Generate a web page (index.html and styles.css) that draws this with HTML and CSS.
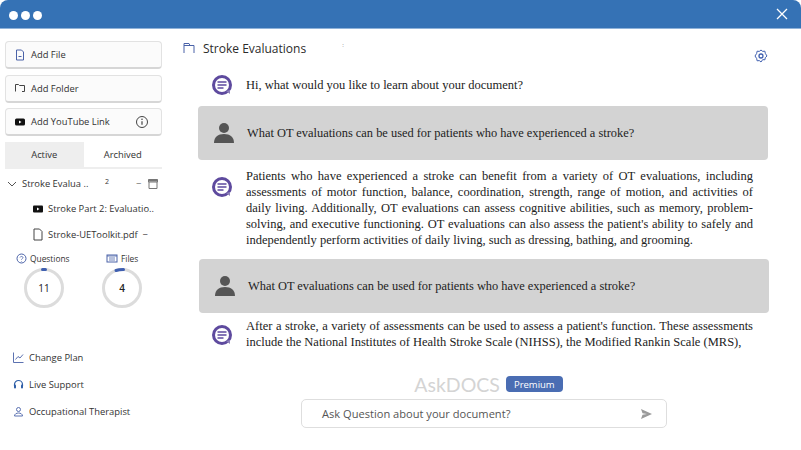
FILE: index.html
```html
<!doctype html>
<html>
  <head>
    <meta charset="UTF-8" />
    <title>AskDOCS</title>
    <link rel="stylesheet" href="styles.css">
  </head>
  <body>
    <div class="window">
      <header class="titlebar">
        <div class="dots"><span></span><span></span><span></span></div>
        <svg class="close" width="14" height="14" viewBox="0 0 14 14"><path d="M2 2l10 10M12 2L2 12" stroke="#fff" stroke-width="1.3" fill="none"/></svg>
      </header>
      <div class="content">
        <aside class="sidebar">
          <button class="add-btn">
            <svg width="12" height="12" viewBox="0 0 12 12"><path d="M2.500 1h5l2 2v8h-7z" fill="none" stroke="#4a62a8"/><path d="M4.500 7.500h3" stroke="#4a62a8"/></svg>
            Add File
          </button>
          <button class="add-btn">
            <svg width="12" height="12" viewBox="0 0 12 12"><path d="M1.500 9.500v-7h3l1 1h5v6M8 9.500h2.500" fill="none" stroke="#444"/></svg>
            Add Folder
          </button>
          <button class="add-btn">
            <svg width="12" height="12" viewBox="0 0 12 12"><rect x="1" y="2.500" width="10" height="7" rx="1.500" fill="#111"/><path d="M5 4.500l2.500 1.500L5 7.500z" fill="#fff"/></svg>
            Add YouTube Link
            <svg class="info" width="14" height="14" viewBox="0 0 14 14"><circle cx="7" cy="7" r="5.500" fill="none" stroke="#444"/><path d="M7 6.200v3.600" stroke="#444" stroke-width="1.200"/><circle cx="7" cy="4.300" r=".8" fill="#444"/></svg>
          </button>

          <div class="tabs">
            <div class="tab tab-active">Active</div>
            <div class="tab">Archived</div>
          </div>

          <div class="tree-row">
            <svg width="10" height="10" viewBox="0 0 10 10"><path d="M1 3l4 4 4-4" fill="none" stroke="#555"/></svg>
            <span class="tree-name">Stroke Evalua ..</span>
            <span class="tree-count">2</span>
            <span class="tree-dash">&minus;</span>
            <svg width="12" height="12" viewBox="0 0 12 12"><path d="M1.500 1.500h9v2.500h-9zM2 4v6.500h8V4" fill="none" stroke="#777"/><rect x="1.500" y="1.500" width="9" height="2" fill="#777"/></svg>
          </div>
          <div class="doc-row">
            <svg width="12" height="12" viewBox="0 0 12 12"><rect x="1" y="2.500" width="10" height="7" rx="1" fill="#111"/><path d="M5 4.500l2.500 1.500L5 7.500z" fill="#fff"/></svg>
            <span>Stroke Part 2: Evaluatio..</span>
          </div>
          <div class="doc-row">
            <svg width="12" height="13" viewBox="0 0 12 13"><path d="M2 1h5.500L10 3.500V12H2z" fill="none" stroke="#444"/></svg>
            <span>Stroke-UEToolkit.pdf &nbsp;&minus;</span>
          </div>

          <div class="stats">
            <div class="stat">
              <div class="stat-label">
                <svg width="11" height="11" viewBox="0 0 11 11"><circle cx="5.500" cy="5.500" r="4.500" fill="none" stroke="#4a62a8"/><path d="M4 4.500c.3-1.500 3-1.300 3 .1 0 1-1.500 1-1.500 2M5.500 8v.6" fill="none" stroke="#4a62a8" stroke-width=".8"/></svg>
                Questions
              </div>
              <div class="ring ring-questions">
                <svg width="40" height="40" viewBox="0 0 40 40"><circle cx="20" cy="20" r="18.500" fill="none" stroke="#dcdcdc" stroke-width="3"/><path d="M18.500 1.500h3" fill="none" stroke="#3f5fb0" stroke-width="3" stroke-linecap="round"/></svg>
                <span>11</span>
              </div>
            </div>
            <div class="stat">
              <div class="stat-label">
                <svg width="12" height="11" viewBox="0 0 12 11"><rect x="1" y="2" width="10" height="7" fill="none" stroke="#4a62a8"/><path d="M1 3h10M3 5h6M3 7h6" stroke="#4a62a8" stroke-width=".8"/></svg>
                Files
              </div>
              <div class="ring ring-files">
                <svg width="40" height="40" viewBox="0 0 40 40"><circle cx="20" cy="20" r="18.500" fill="none" stroke="#dcdcdc" stroke-width="3"/><path d="M14 2.500c2-.7 4-1 7.500-1" fill="none" stroke="#3f5fb0" stroke-width="3" stroke-linecap="round"/></svg>
                <span>4</span>
              </div>
            </div>
          </div>

          <nav class="links">
            <a>
              <svg width="11" height="11" viewBox="0 0 11 11"><path d="M.5.500v10h10M2.500 7.500l2.500-3 2 1.500L10 2.500" fill="none" stroke="#4a62a8" stroke-width=".9"/></svg>
              Change Plan
            </a>
            <a>
              <svg width="11" height="11" viewBox="0 0 11 11"><path d="M1.500 7V5.500a4 4 0 0 1 8 0V7" fill="none" stroke="#2f5fa8" stroke-width="1.200"/><rect x="1" y="5.500" width="2" height="4" rx="1" fill="#2f5fa8"/><rect x="8" y="5.500" width="2" height="4" rx="1" fill="#2f5fa8"/></svg>
              Live Support
            </a>
            <a>
              <svg width="11" height="11" viewBox="0 0 11 11"><circle cx="5.500" cy="3.500" r="2" fill="none" stroke="#4a62a8" stroke-width=".9"/><path d="M1.500 10c0-4 8-4 8 0z" fill="none" stroke="#4a62a8" stroke-width=".9"/></svg>
              Occupational Therapist
            </a>
          </nav>
        </aside>

        <main class="main">
          <div class="chat-head">
            <div class="chat-title">
              <svg width="12" height="12" viewBox="0 0 12 12"><path d="M1 11V1.500h5l1 2h4V11M1 3.500h6" fill="none" stroke="#4a62a8"/></svg>
              Stroke Evaluations
              <span class="speck">:</span>
            </div>
            <svg class="gear" width="14" height="14" viewBox="0 0 14 14"><path d="M7 1l1.700 1.400 2.200-.2.400 2.200L13 7l-1.700 1.600-.4 2.200-2.200-.2L7 13l-1.700-1.400-2.200.2-.4-2.200L1 7l1.700-2.600.4-2.200 2.200.2z" fill="none" stroke="#3f5fb0"/><circle cx="7" cy="7" r="2" fill="none" stroke="#3f5fb0" stroke-width="1.300"/></svg>
          </div>

          <div class="msg msg-first">
            <svg class="bot" width="22" height="22" viewBox="0 0 22 22"><circle cx="11" cy="11" r="8.500" fill="#fff" stroke="#5e4a9e" stroke-width="3"/><path d="M6.500 8h9M6.500 11h9M6.500 14h6" stroke="#5e4a9e" stroke-width="1.600"/><path d="M15 17l4 3v-4z" fill="#8d80b8"/></svg>
            <p>Hi, what would you like to learn about your document?</p>
          </div>

          <div class="msg msg-user">
            <svg class="person" width="22" height="22" viewBox="0 0 22 22"><circle cx="11" cy="6" r="5" fill="#555"/><path d="M1 21c0-6 4-9 10-9s10 3 10 9z" fill="#555"/></svg>
            <p>What OT evaluations can be used for patients who have experienced a stroke?</p>
          </div>

          <div class="msg msg-answer">
            <svg class="bot" width="22" height="22" viewBox="0 0 22 22"><circle cx="11" cy="11" r="8.500" fill="#fff" stroke="#5e4a9e" stroke-width="3"/><path d="M6.500 8h9M6.500 11h9M6.500 14h6" stroke="#5e4a9e" stroke-width="1.600"/><path d="M15 17l4 3v-4z" fill="#8d80b8"/></svg>
            <p>Patients who have experienced a stroke can benefit from a variety of OT evaluations, including assessments of motor function, balance, coordination, strength, range of motion, and activities of daily living. Additionally, OT evaluations can assess cognitive abilities, such as memory, problem-solving, and executive functioning. OT evaluations can also assess the patient's ability to safely and independently perform activities of daily living, such as dressing, bathing, and grooming.</p>
          </div>

          <div class="msg msg-user msg-user-2">
            <svg class="person" width="22" height="22" viewBox="0 0 22 22"><circle cx="11" cy="6" r="5" fill="#555"/><path d="M1 21c0-6 4-9 10-9s10 3 10 9z" fill="#555"/></svg>
            <p>What OT evaluations can be used for patients who have experienced a stroke?</p>
          </div>

          <div class="msg msg-answer msg-last">
            <svg class="bot" width="22" height="22" viewBox="0 0 22 22"><circle cx="11" cy="11" r="8.500" fill="#fff" stroke="#5e4a9e" stroke-width="3"/><path d="M6.500 8h9M6.500 11h9M6.500 14h6" stroke="#5e4a9e" stroke-width="1.600"/><path d="M15 17l4 3v-4z" fill="#8d80b8"/></svg>
            <p>After a stroke, a variety of assessments can be used to assess a patient's function. These assessments include the National Institutes of Health Stroke Scale (NIHSS), the Modified Rankin Scale (MRS),</p>
          </div>

          <div class="brand">
            <span class="brand-name">AskDOCS</span>
            <span class="badge">Premium</span>
          </div>
          <div class="ask">
            <span>Ask Question about your document?</span>
            <svg width="13" height="12" viewBox="0 0 13 12"><path d="M1 1l11 5-11 5 1.500-4.200L7 6l-4.500-.8z" fill="#9a9a9a"/></svg>
          </div>
        </main>
      </div>
    </div>
  </body>
</html>
```

FILE: styles.css
```css
html, body {
  margin: 0;
  height: 100%;
}
body {
  font-family: "Open Sans", "Liberation Sans", sans-serif;
  background: #fff;
  color: #333;
  overflow: hidden;
}
svg {
  display: block;
  flex: none;
}
.window {
  height: 450px;
  display: flex;
  flex-direction: column;
}
.titlebar {
  height: 28px;
  background: #3572b5;
  border-bottom: 1px solid #8fb2d9;
  border-radius: 8px 8px 0 0;
  display: flex;
  align-items: center;
  justify-content: space-between;
  padding: 0 12px 0 9px;
}
.dots {
  display: flex;
  gap: 3px;
  margin-top: 3px;
}
.dots span {
  width: 9px;
  height: 9px;
  border-radius: 50%;
  background: #fff;
}
.content {
  flex: 1;
  display: flex;
}

/* left column */
.sidebar {
  width: 157px;
  padding: 12px 0 0 5px;
  font-size: 9.400px;
}
.add-btn {
  width: 100%;
  height: 28px;
  margin-bottom: 5.500px;
  padding: 0 8px;
  display: flex;
  align-items: center;
  gap: 5px;
  background: #fbfbfb;
  border: 1px solid #e2e2e2;
  border-bottom: 2px solid #d6d6d6;
  border-radius: 4px;
  font: inherit;
  color: #333;
}
.info {
  margin-left: auto;
  margin-right: 4px;
}
.tabs {
  display: flex;
  height: 25px;
  border-bottom: 2px solid #eee;
}
.tab {
  flex: 1;
  display: flex;
  align-items: center;
  justify-content: center;
}
.tab-active {
  background: #eeeeee;
}
.tree-row {
  margin-top: 7px;
  height: 16px;
  display: flex;
  align-items: center;
  padding-left: 2px;
}
.tree-name {
  margin-left: 5px;
  width: 74px;
  white-space: nowrap;
}
.tree-count {
  font-size: 7px;
  margin: -4px 0 0 9px;
}
.tree-dash {
  margin-left: 27px;
  margin-right: 6px;
  color: #666;
}
.doc-row {
  margin-top: 9px;
  height: 16px;
  display: flex;
  align-items: center;
  gap: 4px;
  padding-left: 27px;
  white-space: nowrap;
}
.doc-row + .doc-row {
  margin-top: 10px;
}
.stats {
  display: flex;
  margin-top: 10px;
}
.stat {
  width: 85px;
  padding-left: 11px;
  box-sizing: border-box;
}
.stat + .stat {
  padding-left: 16px;
  width: 72px;
}
.stat-label {
  display: flex;
  align-items: center;
  gap: 3px;
  font-size: 8.400px;
  height: 12px;
}
.ring {
  width: 40px;
  height: 40px;
  margin-top: 3px;
  display: grid;
  place-items: center;
  font-size: 10px;
  color: #222;
}
.ring > * {
  grid-area: 1 / 1;
}
.ring-questions {
  margin-left: 8px;
}
.ring-files {
  margin-left: -4px;
  font-weight: 600;
}
.links {
  margin-top: 43px;
  display: flex;
  flex-direction: column;
  gap: 13.200px;
  padding-left: 8px;
}
.links a {
  display: flex;
  align-items: center;
  gap: 5px;
  height: 14px;
}

/* chat column */
.main {
  flex: 1;
  padding: 12px 33px 0 36px;
  min-width: 0;
}
.chat-head {
  display: flex;
  align-items: flex-start;
  justify-content: space-between;
}
.chat-title {
  display: flex;
  align-items: center;
  gap: 8px;
  height: 14px;
  margin-left: -15px;
  font-size: 12px;
  color: #2b2b2b;
}
.speck {
  font-size: 6px;
  margin: -6px 0 0 28px;
  color: #777;
}
.gear {
  margin-top: 8px;
}
.msg {
  display: flex;
  align-items: center;
}
.msg p {
  margin: 0;
  font-family: "Liberation Serif", serif;
  font-size: 12.500px;
  line-height: 16px;
  color: #222;
  text-align: justify;
}
.bot {
  margin-left: 13px;
  margin-right: 13px;
}
.msg-first {
  margin-top: 9px;
  height: 25px;
}
.msg-user {
  margin-top: 9px;
  height: 54px;
  background: #d3d3d3;
  border-radius: 4px;
}
.msg-user p {
  font-size: 12.400px;
}
.person {
  margin: 0 12px 0 15px;
}
.msg-answer {
  margin-top: 8px;
  padding-right: 15px;
  align-items: flex-start;
}
.msg-answer .bot {
  margin-top: 8px;
}
.msg-user-2 {
  margin-top: 11px;
  margin-left: 1px;
  margin-right: -1px;
}
.msg-last {
  margin-top: 5px;
}
.msg-last .bot {
  margin-top: 6px;
}
.brand {
  margin-top: 26px;
  display: flex;
  align-items: flex-start;
  justify-content: center;
  gap: 6px;
  padding-left: 11px;
}
.brand-name {
  font-family: "Lato", sans-serif;
  font-size: 19.500px;
  line-height: 19px;
  margin-top: -1px;
  margin-bottom: 1px;
  color: #d4d4d4;
}
.badge {
  background: #4a6db3;
  color: #fff;
  font-size: 9.500px;
  padding: 2px 8px 1px;
  border-radius: 4px;
}
.ask {
  margin: 4px 0 0 103px;
  width: 366px;
  height: 29px;
  box-sizing: border-box;
  border: 1px solid #dedede;
  border-radius: 5px;
  display: flex;
  align-items: center;
  justify-content: space-between;
  padding: 0 13px 0 20px;
  font-size: 11.100px;
  color: #555;
}
```
